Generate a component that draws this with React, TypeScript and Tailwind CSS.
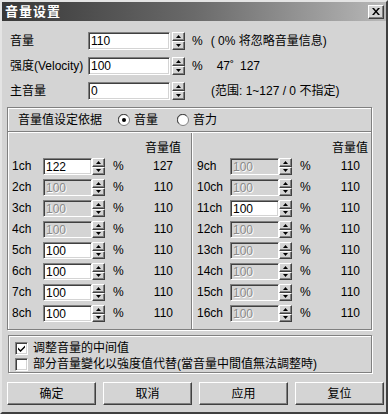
import React from "react";

const sunken =
  "border border-t-[#808080] border-l-[#808080] border-b-white border-r-white shadow-[inset_1px_1px_0_#404040,inset_-1px_-1px_0_#d4d4d4]";
const raised =
  "border border-t-white border-l-white border-r-[#404040] border-b-[#404040] shadow-[inset_-1px_-1px_0_#808080]";

function Arrow({ up }: { up: boolean }) {
  return (
    <svg width="5" height="3" viewBox="0 0 5 3">
      {up ? <path d="M2.5 0L5 3H0Z" fill="#000" /> : <path d="M0 0H5L2.5 3Z" fill="#000" />}
    </svg>
  );
}

function Spin({ h }: { h: string }) {
  return (
    <div className={`flex flex-col w-[13px] ${h}`}>
      <div className={`flex-1 bg-[#d4d4d4] flex items-center justify-center ${raised}`}>
        <Arrow up />
      </div>
      <div className={`flex-1 bg-[#d4d4d4] flex items-center justify-center ${raised}`}>
        <Arrow up={false} />
      </div>
    </div>
  );
}

function Field({ value, enabled, cls }: { value: string; enabled: boolean; cls: string }) {
  return (
    <div
      className={`${cls} ${sunken} ${
        enabled ? "bg-white text-black" : "bg-[#d4d4d4] text-[#8a8a8a] [text-shadow:1px_1px_0_#fff]"
      } pl-[2px] text-[12px] flex items-center`}
    >
      {value}
    </div>
  );
}

function TopRow({ label, value, children }: { label: string; value: string; children: React.ReactNode }) {
  return (
    <div className="flex h-[25px] items-start">
      <div className="w-[78px] text-[12px] leading-[18px] whitespace-nowrap">{label}</div>
      <Field value={value} enabled cls="w-[82px] h-[18px]" />
      <div className="ml-[2px]">
        <Spin h="h-[18px]" />
      </div>
      <div className="flex text-[12px] leading-[18px] whitespace-nowrap">{children}</div>
    </div>
  );
}

type Ch = { label: string; value: string; enabled: boolean; vol: string };

function ChRow({ ch, labelW }: { ch: Ch; labelW: string }) {
  return (
    <div className="flex h-[21px] items-start">
      <div className={`${labelW} text-[12px] leading-[17px]`}>{ch.label}</div>
      <Field value={ch.value} enabled={ch.enabled} cls="w-[49px] h-[17px]" />
      <Spin h="h-[17px]" />
      <div className="ml-[8px] w-[10px] text-[12px] leading-[17px]">%</div>
      <div className="w-[50px] text-right text-[12px] leading-[17px]">{ch.vol}</div>
    </div>
  );
}

function ChColumn({ chs, labelW, cls }: { chs: Ch[]; labelW: string; cls: string }) {
  return (
    <div className={cls}>
      <div className="flex h-[25px] pt-[8px]">
        <div className={labelW} />
        <div className="w-[102px]" />
        <div className="text-[12px] leading-[14px] whitespace-nowrap">音量值</div>
      </div>
      {chs.map((c) => (
        <ChRow key={c.label} ch={c} labelW={labelW} />
      ))}
    </div>
  );
}

function Radio({ on }: { on: boolean }) {
  return (
    <svg width="12" height="12" viewBox="0 0 12 12">
      <circle cx="6" cy="6" r="5.5" fill="#fff" stroke="#808080" />
      <path d="M1.8 9.5A5 5 0 0 1 9.5 1.8" stroke="#404040" fill="none" />
      {on && <circle cx="6" cy="6" r="2" fill="#000" />}
    </svg>
  );
}

function Check({ on }: { on: boolean }) {
  return (
    <div className={`w-[13px] h-[13px] bg-white ${sunken} flex items-center justify-center`}>
      {on && (
        <svg width="7" height="7" viewBox="0 0 7 7">
          <path d="M0 2.5L2.5 5L7 0.5V2.5L2.5 7L0 4.5Z" fill="#000" />
        </svg>
      )}
    </div>
  );
}

export default function App() {
  const left: Ch[] = [
    { label: "1ch", value: "122", enabled: true, vol: "127" },
    { label: "2ch", value: "100", enabled: false, vol: "110" },
    { label: "3ch", value: "100", enabled: false, vol: "110" },
    { label: "4ch", value: "100", enabled: false, vol: "110" },
    { label: "5ch", value: "100", enabled: true, vol: "110" },
    { label: "6ch", value: "100", enabled: true, vol: "110" },
    { label: "7ch", value: "100", enabled: true, vol: "110" },
    { label: "8ch", value: "100", enabled: true, vol: "110" },
  ];
  const right: Ch[] = [
    { label: "9ch", value: "100", enabled: false, vol: "110" },
    { label: "10ch", value: "100", enabled: false, vol: "110" },
    { label: "11ch", value: "100", enabled: true, vol: "110" },
    { label: "12ch", value: "100", enabled: false, vol: "110" },
    { label: "13ch", value: "100", enabled: false, vol: "110" },
    { label: "14ch", value: "100", enabled: false, vol: "110" },
    { label: "15ch", value: "100", enabled: false, vol: "110" },
    { label: "16ch", value: "100", enabled: false, vol: "110" },
  ];
  const buttons = ["确定", "取消", "应用", "复位"];

  return (
    <div className="w-[388px] h-[414px] bg-[#d4d4d4] text-black font-['Liberation_Sans','Noto_Sans_CJK_SC',sans-serif] border-2 border-t-[#e4e4e4] border-l-[#e4e4e4] border-r-[#404040] border-b-[#404040] flex flex-col overflow-hidden">
      {/* title bar */}
      <div className="h-[19px] flex items-center justify-between bg-gradient-to-r from-[#383838] via-[#6a6a6a] to-[#b8b8b8]">
        <div className="pl-[3px] text-white font-bold text-[13px] leading-[19px] tracking-[1px]">音量设置</div>
        <div className={`mr-[2px] w-[16px] h-[14px] bg-[#d4d4d4] ${raised} flex items-center justify-center`}>
          <svg width="8" height="7" viewBox="0 0 8 7">
            <path d="M0 0H2L4 2.5L6 0H8L5 3.5L8 7H6L4 4.5L2 7H0L3 3.5Z" fill="#000" />
          </svg>
        </div>
      </div>

      {/* top rows */}
      <div className="mt-[11px] pl-[8px] flex flex-col">
        <TopRow label="音量" value="110">
          <span className="ml-[7px]">%</span>
          <span className="ml-[8px]">( 0% 将忽略音量信息)</span>
        </TopRow>
        <TopRow label="强度(Velocity)" value="100">
          <span className="ml-[7px]">%</span>
          <span className="ml-[14px]">47˚</span>
          <span className="ml-[6px]">127</span>
        </TopRow>
        <TopRow label="主音量" value="0">
          <span className="ml-[26px]">(范围: 1~127 / 0 不指定)</span>
        </TopRow>
      </div>

      {/* main frame */}
      <div className="ml-[5px] w-[365px] border border-[#808080] shadow-[inset_1px_1px_0_#fff,1px_1px_0_#fff] flex flex-col">
        <div className="h-[24px] flex items-center border-b border-b-[#808080] shadow-[0_1px_0_#fff] text-[12px]">
          <div className="pl-[10px] w-[110px] whitespace-nowrap">音量值设定依据</div>
          <Radio on />
          <div className="ml-[4px] w-[43px]">音量</div>
          <Radio on={false} />
          <div className="ml-[4px]">音力</div>
        </div>
        <div className="flex h-[196px] mt-[1px]">
          <ChColumn chs={left} labelW="w-[35px] pl-[4px]" cls="w-[184px] border-r border-r-[#808080] shadow-[1px_0_0_#fff]" />
          <ChColumn chs={right} labelW="w-[38px] pl-[5px]" cls="flex-1" />
        </div>
      </div>

      {/* checkbox box */}
      <div className="mt-[5px] ml-[6px] w-[364px] h-[38px] border border-[#808080] shadow-[inset_1px_1px_0_#fff,1px_1px_0_#fff] pt-[4px] pl-[6px] flex flex-col">
        <div className="flex items-center h-[16px] text-[12px]">
          <Check on />
          <div className="ml-[5px]">调整音量的中间值</div>
        </div>
        <div className="flex items-center h-[16px] text-[12px]">
          <Check on={false} />
          <div className="ml-[5px] whitespace-nowrap">部分音量變化以強度值代替(當音量中間值無法調整時)</div>
        </div>
      </div>

      {/* buttons */}
      <div className="mt-[9px] ml-[5px] flex gap-[7px]">
        {buttons.map((b) => (
          <div key={b} className={`w-[89px] h-[23px] ${raised} flex items-center justify-center text-[12px]`}>
            {b}
          </div>
        ))}
      </div>
    </div>
  );
}
